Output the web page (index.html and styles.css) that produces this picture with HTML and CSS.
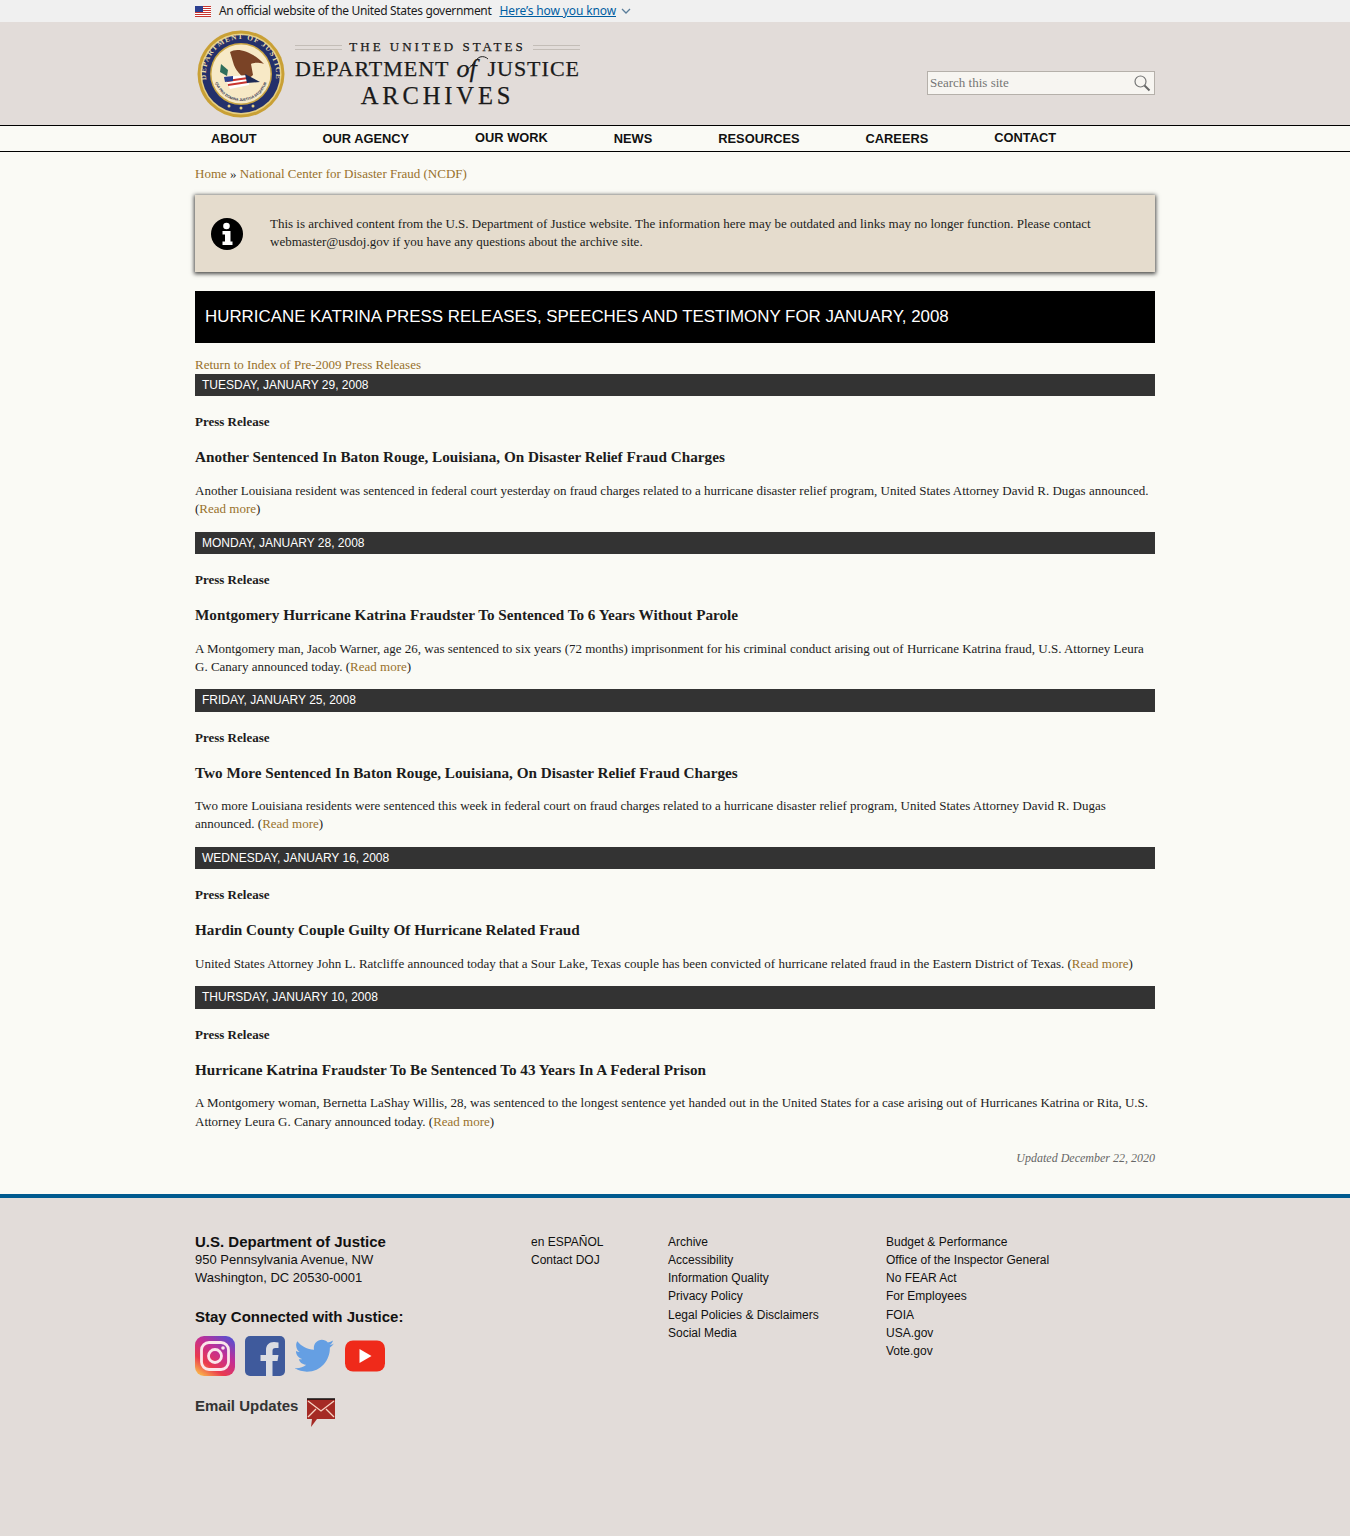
FILE: index.html
```html
<!DOCTYPE html>
<html lang="en">
<head>
<meta charset="utf-8">
<title>Hurricane Katrina Press Releases</title>
<link rel="stylesheet" href="styles.css">
</head>
<body>
<div class="gov">
  <div class="wrap gov-in">
    <svg class="flag" width="16" height="11" viewBox="0 0 16 11"><rect width="16" height="11" fill="#fff"/><g fill="#c8352f"><rect width="16" height="1"/><rect y="2" width="16" height="1"/><rect y="4" width="16" height="1"/><rect y="6" width="16" height="1"/><rect y="8" width="16" height="1"/><rect y="10" width="16" height="1"/></g><rect width="8" height="6" fill="#2b3f8f"/></svg>
    <span class="gov-t">An official website of the United States government</span>
    <a class="gov-l" href="#">Here’s how you know</a>
    <svg class="chev" width="10" height="6" viewBox="0 0 10 6"><path d="M1 1l4 4 4-4" fill="none" stroke="#5a7d9a" stroke-width="1.3"/></svg>
  </div>
</div>
<header class="head">
  <div class="wrap head-in">
    <a class="logo" href="#">
      <svg class="seal" width="88" height="88" viewBox="0 0 88 88">
        <defs>
          <path id="arcTop" d="M9.500 50A35 35 0 1 1 78.500 50"/>
          <path id="arcIn" d="M17 44A27 27 0 0 0 71 44"/>
        </defs>
        <circle cx="44" cy="44" r="43.500" fill="#c9a035"/>
        <circle cx="44" cy="44" r="40.500" fill="#e6cf84"/>
        <circle cx="44" cy="44" r="39" fill="#24306b"/>
        <text class="seal-t"><textPath href="#arcTop" startOffset="50%" text-anchor="middle">DEPARTMENT OF JUSTICE</textPath></text>
        <circle cx="44" cy="44" r="31" fill="#c9a544"/>
        <circle cx="44" cy="44" r="29.500" fill="#f7e9c6"/>
        <text class="seal-s"><textPath href="#arcIn" startOffset="50%" text-anchor="middle">QUI PRO DOMINA JUSTITIA SEQUITUR</textPath></text>
        <path d="M33 22C40 17 55 21 67 34 60 32 56 33 54 34L56 45 50 50C44 46 38 40 36 32Z" fill="#7a4326"/>
        <path d="M28 47L50 45 52 55 33 59Z" fill="#fff"/>
        <path d="M30 51L51 48M31 55L51 52" stroke="#c8352f" stroke-width="2" fill="none"/>
        <path d="M27 47l9-1v5l-8 1z" fill="#2b3f8f"/>
        <path d="M24 34l7 6-1 6-7-4z" fill="#2f6e5c"/>
        <path d="M48 44l15 8-13 1z" fill="#1e2a55"/>
        <g fill="#e6cf84"><circle cx="44" cy="78" r="1.500"/><circle cx="32" cy="76" r="1.500"/><circle cx="56" cy="76" r="1.500"/></g>
      </svg>
      <div class="wordmark">
        <div class="wm1"><span class="rule"></span><span>THE UNITED STATES</span><span class="rule"></span></div>
        <div class="wm2"><span>DEPARTMENT</span><span class="of">of<svg class="swash" width="24" height="16" viewBox="0 0 24 16"><path d="M1 15C6 14 10 4 15 2c3-1 6 0 8 2" fill="none" stroke="#222" stroke-width="1"/></svg></span><span>JUSTICE</span></div>
        <div class="wm3">ARCHIVES</div>
      </div>
    </a>
    <form class="search">
      <span class="search-t">Search this site</span>
      <svg width="18" height="18" viewBox="0 0 18 18"><circle cx="7.500" cy="7.500" r="5.500" fill="none" stroke="#777" stroke-width="1.200"/><path d="M11.500 11.500l5 5" stroke="#666" stroke-width="2"/></svg>
    </form>
  </div>
</header>
<nav class="nav">
  <div class="wrap nav-in">
    <a href="#">ABOUT</a>
    <a href="#">OUR AGENCY</a>
    <a class="up" href="#">OUR WORK</a>
    <a href="#">NEWS</a>
    <a href="#">RESOURCES</a>
    <a href="#">CAREERS</a>
    <a class="up" href="#">CONTACT</a>
  </div>
</nav>
<main class="wrap main">
  <div class="crumb"><a href="#">Home</a> » <a href="#">National Center for Disaster Fraud (NCDF)</a></div>
  <div class="notice">
    <svg class="info" width="32" height="32" viewBox="0 0 32 32"><circle cx="16" cy="16" r="16" fill="#000"/><path d="M11.500 13h8v10.500h2V27h-10v-3.500h2.500V16.500h-2.500z" fill="#fff"/><circle cx="15.500" cy="8" r="3.300" fill="#fff"/></svg>
    <p>This is archived content from the U.S. Department of Justice website. The information here may be outdated and links may no longer function. Please contact webmaster@usdoj.gov if you have any questions about the archive site.</p>
  </div>
  <h1 class="title">HURRICANE KATRINA PRESS RELEASES, SPEECHES AND TESTIMONY FOR JANUARY, 2008</h1>
  <a class="back" href="#">Return to Index of Pre-2009 Press Releases</a>

  <h2 class="date">TUESDAY, JANUARY 29, 2008</h2>
  <div class="kind">Press Release</div>
  <h3 class="hl">Another Sentenced In Baton Rouge, Louisiana, On Disaster Relief Fraud Charges</h3>
  <p class="txt">Another Louisiana resident was sentenced in federal court yesterday on fraud charges related to a hurricane disaster relief program, United States Attorney David R. Dugas announced. (<a href="#">Read more</a>)</p>

  <h2 class="date">MONDAY, JANUARY 28, 2008</h2>
  <div class="kind">Press Release</div>
  <h3 class="hl">Montgomery Hurricane Katrina Fraudster To Sentenced To 6 Years Without Parole</h3>
  <p class="txt">A Montgomery man, Jacob Warner, age 26, was sentenced to six years (72 months) imprisonment for his criminal conduct arising out of Hurricane Katrina fraud, U.S. Attorney Leura G. Canary announced today. (<a href="#">Read more</a>)</p>

  <h2 class="date">FRIDAY, JANUARY 25, 2008</h2>
  <div class="kind">Press Release</div>
  <h3 class="hl">Two More Sentenced In Baton Rouge, Louisiana, On Disaster Relief Fraud Charges</h3>
  <p class="txt">Two more Louisiana residents were sentenced this week in federal court on fraud charges related to a hurricane disaster relief program, United States Attorney David R. Dugas announced. (<a href="#">Read more</a>)</p>

  <h2 class="date">WEDNESDAY, JANUARY 16, 2008</h2>
  <div class="kind">Press Release</div>
  <h3 class="hl">Hardin County Couple Guilty Of Hurricane Related Fraud</h3>
  <p class="txt">United States Attorney John L. Ratcliffe announced today that a Sour Lake, Texas couple has been convicted of hurricane related fraud in the Eastern District of Texas. (<a href="#">Read more</a>)</p>

  <h2 class="date">THURSDAY, JANUARY 10, 2008</h2>
  <div class="kind">Press Release</div>
  <h3 class="hl">Hurricane Katrina Fraudster To Be Sentenced To 43 Years In A Federal Prison</h3>
  <p class="txt">A Montgomery woman, Bernetta LaShay Willis, 28, was sentenced to the longest sentence yet handed out in the United States for a case arising out of Hurricanes Katrina or Rita, U.S. Attorney Leura G. Canary announced today. (<a href="#">Read more</a>)</p>

  <div class="updated">Updated December 22, 2020</div>
</main>
<footer class="foot">
  <div class="wrap foot-in">
    <div class="f-a">
      <div class="f-org">U.S. Department of Justice</div>
      <div class="f-addr">950 Pennsylvania Avenue, NW<br>Washington, DC 20530-0001</div>
      <div class="f-stay">Stay Connected with Justice:</div>
      <div class="social">
        <svg width="40" height="40" viewBox="0 0 40 40"><defs><linearGradient id="ig" x1="0.1" y1="1" x2="0.8" y2="0"><stop offset="0" stop-color="#fcc14a"/><stop offset=".3" stop-color="#ea3a4f"/><stop offset=".65" stop-color="#c22e96"/><stop offset="1" stop-color="#5d4dcd"/></linearGradient></defs><rect width="40" height="40" rx="9" fill="url(#ig)"/><rect x="6.500" y="6.500" width="27" height="27" rx="7.500" fill="none" stroke="#fbe6ea" stroke-width="2.800"/><circle cx="20" cy="20" r="6.500" fill="none" stroke="#fbe6ea" stroke-width="2.800"/><circle cx="28" cy="12" r="1.800" fill="#fbe6ea"/></svg>
        <svg width="40" height="40" viewBox="0 0 40 40"><rect width="40" height="40" rx="5" fill="#3f5a9c"/><path d="M27.500 40V25h5l1-6h-6v-4c0-2 .8-3 3-3h3V6.500c-1.500-.3-3-.5-4.500-.5-5 0-8 3-8 8v5h-5.500v6H21v15z" fill="#dcdde2"/></svg>
        <svg width="40" height="40" viewBox="0 0 24 24"><path d="M23.500 4.600c-.9.400-1.800.7-2.800.8 1-.6 1.800-1.500 2.100-2.700-.9.600-2 1-3.100 1.200C18.800 2.900 17.500 2.300 16.100 2.300c-2.700 0-4.800 2.200-4.800 4.800 0 .4 0 .8.100 1.100C7.400 8 3.800 6.100 1.400 3.100.9 3.800.7 4.700.7 5.600c0 1.700.8 3.200 2.100 4-.8 0-1.500-.2-2.200-.6v.1c0 2.300 1.700 4.300 3.900 4.700-.4.100-.8.200-1.300.2-.3 0-.6 0-.9-.1.600 1.900 2.400 3.300 4.500 3.300-1.700 1.300-3.700 2.100-6 2.100-.4 0-.8 0-1.100-.1 2.100 1.400 4.700 2.200 7.400 2.200 8.900 0 13.800-7.400 13.800-13.800v-.6c.9-.7 1.800-1.500 2.400-2.500z" fill="#659fe3"/></svg>
        <svg width="40" height="40" viewBox="0 0 40 40"><rect y="4.500" width="40" height="31" rx="8" fill="#ef2a1a"/><path d="M14.500 13l12 7-12 7z" fill="#fff"/></svg>
      </div>
      <div class="f-email"><span>Email Updates</span>
        <svg width="30" height="30" viewBox="0 0 30 30"><path d="M1 1h28v20H11l-6 8 1-8H1z" fill="#a52a24"/><path d="M1 1h28" stroke="#111" stroke-width="1.500"/><path d="M2 3l13 10L28 3M2 19l8-8M28 19l-8-8" fill="none" stroke="#f6d3c4" stroke-width="1.300"/></svg>
      </div>
    </div>
    <ul class="f-col f-b"><li>en ESPAÑOL</li><li>Contact DOJ</li></ul>
    <ul class="f-col f-c"><li>Archive</li><li>Accessibility</li><li>Information Quality</li><li>Privacy Policy</li><li>Legal Policies &amp; Disclaimers</li><li>Social Media</li></ul>
    <ul class="f-col f-d"><li>Budget &amp; Performance</li><li>Office of the Inspector General</li><li>No FEAR Act</li><li>For Employees</li><li>FOIA</li><li>USA.gov</li><li>Vote.gov</li></ul>
  </div>
</footer>
</body>
</html>
```
FILE: styles.css
```css
* { box-sizing: border-box; }
html, body { margin: 0; padding: 0; }
body { background: #fafaf5; color: #1c1c1c; font-family: "Liberation Serif", serif; font-size: 13px; line-height: 18.2px; }
a { color: #98712b; text-decoration: none; }
.wrap { width: 960px; margin: 0 auto; }
.gov { height: 22px; background: #f0f0f0; }
.gov-in { display: flex; align-items: center; height: 22px; font-family: "Noto Sans", sans-serif; font-size: 12px; }
.flag { margin-right: 8px; }
.gov-t { color: #1b1b1b; margin-right: 8px; letter-spacing: -0.33px; }
.gov-l { color: #005ea2; text-decoration: underline; letter-spacing: -0.12px; margin-right: 5px; }
.head { height: 103px; background: #e2dcd9; }
.head-in { display: flex; justify-content: space-between; height: 103px; }
.logo { display: flex; color: #1a1a1a; padding-top: 8px; padding-left: 2px; align-items: flex-start; }
.seal { flex: none; }
.seal-t { font-family: "Liberation Serif", serif; font-size: 7.500px; font-weight: 700; letter-spacing: 1.100px; fill: #e6d9a8; }
.seal-s { font-family: "Liberation Sans", sans-serif; font-size: 3.600px; font-weight: 700; fill: #2b3050; }
.wordmark { width: 285px; margin-left: 10px; text-align: center; padding-top: 10px; -webkit-text-stroke: .25px #1a1a1a; }
.wm1 { display: flex; align-items: center; gap: 7px; font-size: 13px; line-height: 14px; letter-spacing: 3px; white-space: nowrap; }
.rule { flex: 1; height: 5px; border-top: 1px solid #c3bdb7; border-bottom: 1px solid #c3bdb7; }
.wm2 { display: flex; justify-content: space-between; font-size: 22px; line-height: 26px; letter-spacing: 1px; white-space: nowrap; margin-top: 2px; }
.of { position: relative; font-style: italic; font-size: 26px; letter-spacing: 0; line-height: 26px; padding-right: 8px; margin-left: 4px; }
.swash { position: absolute; right: -4px; top: -1px; }
.wm3 { font-size: 24.500px; line-height: 28px; letter-spacing: 3.900px; }
.search { align-self: flex-start; margin-top: 49px; width: 228px; height: 24px; background: #f7f5f1; border: 1px solid #b5b0aa; display: flex; align-items: center; justify-content: space-between; padding: 0 3px 0 2px; color: #757575; }
.search-t { font-size: 13px; }
.nav { height: 27px; border-top: 1px solid #000; border-bottom: 1px solid #000; background: #fafaf5; }
.nav-in { display: flex; gap: 66px; padding: 2px 0 0 16px; height: 25px; align-items: center; font-family: "Liberation Sans", sans-serif; font-size: 12.830px; font-weight: 700; }
.nav a { color: #111; }
.nav .up { margin-top: -2px; }
.crumb { padding-top: 13px; height: 43px; }
.crumb a { color: #98712b; }
.notice { height: 77px; background: #e5dccd; box-shadow: 0 1px 4px 1px rgba(0,0,0,.7); display: flex; align-items: center; padding-left: 16px; }
.info { flex: none; }
.notice p { margin: 0 0 1px 27px; padding-right: 50px; }
.title { margin: 19px 0 0; background: #000; color: #fff; height: 52px; padding-left: 10px; font-family: "Liberation Sans", sans-serif; font-size: 16.900px; font-weight: 400; line-height: 51px; }
.back { display: block; margin-top: 13px; height: 18px; }
.date { margin: 0; height: 22.200px; background: #333; color: #fff; padding-left: 7px; font-family: "Liberation Sans", sans-serif; font-size: 12px; font-weight: 400; line-height: 22px; }
.kind { font-weight: 700; margin-top: 17px; }
.hl { margin: 16px 0 0; font-size: 15.210px; line-height: 20px; font-weight: 700; }
.txt { margin: 14.500px 0 13.370px; }
.updated { text-align: right; font-style: italic; color: #666; font-size: 12px; margin-top: 18px; height: 45px; }
.foot { border-top: 4px solid #005a8f; background: #e2dcd9; height: 342px; font-family: "Liberation Sans", sans-serif; color: #111; }
.foot-in { display: flex; padding-top: 35px; }
.f-a { width: 336px; }
.f-org { font-size: 15px; font-weight: 700; line-height: 18px; }
.f-addr { font-size: 13px; line-height: 18px; }
.f-stay { font-size: 15px; font-weight: 700; line-height: 18px; margin-top: 21px; }
.social { display: flex; gap: 10px; margin-top: 10px; height: 40px; }
.f-email { display: flex; align-items: flex-start; gap: 8px; margin-top: 21px; font-size: 15px; font-weight: 700; color: #333; line-height: 18px; }
.f-email svg { margin-top: 1px; }
.f-col { list-style: none; margin: 0; padding: 0; font-size: 12px; line-height: 18.200px; }
.f-b { width: 137px; }
.f-c { width: 218px; }
```
